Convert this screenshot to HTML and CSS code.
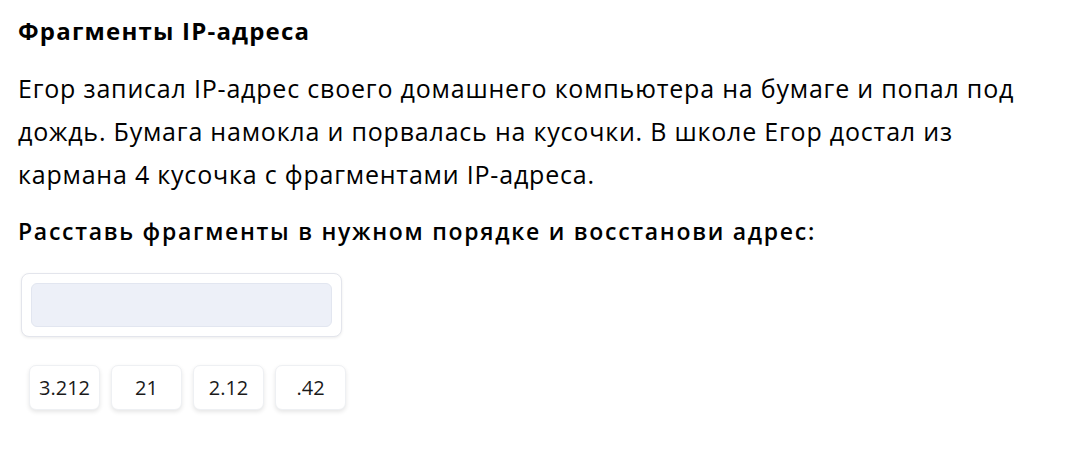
FILE: index.html
```html
<!DOCTYPE html>
<html lang="ru">
<head>
  <meta charset="utf-8">
  <title>Фрагменты IP-адреса</title>
  <link rel="stylesheet" href="styles.css">
</head>
<body>
  <div class="task">
    <h1 class="task-title">Фрагменты IP-адреса</h1>
    <p class="task-text">Егор записал IP-адрес своего домашнего компьютера на бумаге и попал под дождь. Бумага намокла и порвалась на кусочки. В школе Егор достал из кармана 4 кусочка с фрагментами IP-адреса.</p>
    <h2 class="task-question">Расставь фрагменты в нужном порядке и восстанови адрес:</h2>

    <div class="answer">
      <div class="answer-slot"></div>
    </div>

    <div class="chips">
      <button class="chip">3.212</button>
      <button class="chip">21</button>
      <button class="chip">2.12</button>
      <button class="chip">.42</button>
    </div>
  </div>
</body>
</html>
```

FILE: styles.css
```css
body {
  margin: 0;
  background-color: #fff;
  font-family: "Open Sans", Arial, sans-serif;
  color: #000;
}

.task {
  padding: 13px 18px;
}

.task-title {
  margin: 0;
  font-size: 24px;
  font-weight: 700;
  line-height: 36px;
  letter-spacing: 1.2px;
}

.task-text {
  max-width: 1010px;
  margin: 18px 0 0;
  font-size: 25px;
  line-height: 43px;
  letter-spacing: 0.8px;
}

.task-question {
  margin: 17px 0 0;
  font-size: 23px;
  font-weight: 600;
  line-height: 36px;
  letter-spacing: 1.72px;
}

.answer {
  box-sizing: border-box;
  width: 321px;
  height: 64px;
  margin: 24px 0 0 3px;
  padding: 9px;
  background-color: #fff;
  border: 1px solid #e3e5ec;
  border-radius: 8px;
  box-shadow: 0 1px 3px rgba(0, 0, 0, 0.08);
}

.answer-slot {
  box-sizing: border-box;
  height: 44px;
  background-color: #edf0f8;
  border: 1px solid #e2e6f0;
  border-radius: 6px;
}

.chips {
  display: flex;
  gap: 11px;
  margin: 28px 0 0 11px;
}

.chip {
  width: 71px;
  height: 45px;
  padding: 0;
  font-family: inherit;
  font-size: 20px;
  font-weight: 500;
  color: #1a1a1a;
  background-color: #fff;
  border: 1px solid #eef0f3;
  border-radius: 7px;
  box-shadow: 0 2px 4px rgba(0, 0, 0, 0.1);
  cursor: pointer;
}
```
